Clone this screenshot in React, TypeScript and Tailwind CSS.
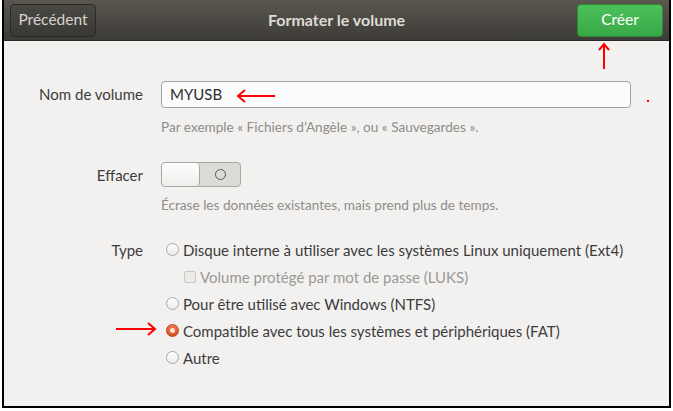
import React from 'react';

const font = { fontFamily: 'Lato, "Noto Sans", sans-serif' };

const Radio = ({ checked }: { checked?: boolean }) =>
  checked ? (
    <span className="flex h-[13px] w-[13px] items-center justify-center rounded-full border border-[#b3441c] bg-gradient-to-b from-[#f0764a] to-[#d9501e]">
      <span className="h-[5px] w-[5px] rounded-full bg-[#fbe3d9]" />
    </span>
  ) : (
    <span className="h-[13px] w-[13px] rounded-full border border-[#a9a8a4] bg-gradient-to-b from-white to-[#ecebe9]" />
  );

const options = [
  { label: 'Disque interne à utiliser avec les systèmes Linux uniquement (Ext4)' },
  { label: 'Volume protégé par mot de passe (LUKS)', sub: true },
  { label: 'Pour être utilisé avec Windows (NTFS)' },
  { label: 'Compatible avec tous les systèmes et périphériques (FAT)', checked: true },
  { label: 'Autre' },
];

export default function App() {
  return (
    <div className="h-[411px] w-[673px] bg-white" style={font}>
      <div className="relative ml-[2px] flex h-[408px] w-[669px] flex-col border-x-2 border-b-2 border-black bg-[#f2f1f0]">
        {/* header bar */}
        <div className="flex h-[41px] items-center justify-between border-b border-[#2a2926] bg-gradient-to-b from-[#5a5750] to-[#3d3b37] px-[6px]">
          <button className="h-[33px] w-[86px] rounded-[4px] border border-[#2b2a27] bg-gradient-to-b from-[#4a4843] to-[#3a3935] text-[15.5px] text-[#d6d3cc]">
            Précédent
          </button>
          <div className="text-[16px] font-bold text-[#dfdbd2]">Formater le volume</div>
          <button className="h-[33px] w-[86px] rounded-[4px] border border-[#2c8a38] bg-gradient-to-b from-[#4cc15a] to-[#37a846] text-[15.5px] text-white">
            Créer
          </button>
        </div>

        {/* form */}
        <div className="grid grid-cols-[139px_1fr] gap-x-[18px] pt-[40px] text-[15px] text-[#3c3c3c]">
          <div className="flex h-[27px] items-center justify-end">Nom de volume</div>
          <div className="flex h-[27px] w-[470px] items-center rounded-[4px] border border-[#a3a29e] bg-[#fbfbfb] pl-[8px] text-[#2c2c2c]">
            MYUSB
          </div>
          <div />
          <div className="mt-[9px] text-[13.6px] text-[#8e8d89]">
            Par exemple « Fichiers d’Angèle », ou « Sauvegardes ».
          </div>

          <div className="mt-[25px] flex h-[25px] items-center justify-end">Effacer</div>
          <div className="mt-[25px] flex h-[25px] w-[80px] overflow-hidden rounded-[4px] border border-[#a9a8a4] bg-[#dcdbd8]">
            <div className="w-[38px] rounded-[4px] border-r border-[#a9a8a4] bg-gradient-to-b from-white to-[#eeedeb]" />
            <div className="flex flex-1 items-center justify-center">
              <span className="h-[11px] w-[11px] rounded-full border border-[#555]" />
            </div>
          </div>
          <div />
          <div className="mt-[8px] text-[13.6px] text-[#8e8d89]">
            Écrase les données existantes, mais prend plus de temps.
          </div>

          <div className="mt-[25px] flex h-[18px] items-center justify-end">Type</div>
          <div className="mt-[25px] flex flex-col gap-[9px]">
            {options.map((o, i) => (
              <div key={i} className={`flex h-[18px] items-center ${o.sub ? 'pl-[23px]' : 'pl-[5px]'}`}>
                {o.sub ? (
                  <span className="h-[12px] w-[12px] rounded-[2px] border border-[#c8c7c3] bg-[#ecebe9]" />
                ) : (
                  <Radio checked={o.checked} />
                )}
                <span className={`ml-[4px] ${o.sub ? 'text-[#9a9995]' : ''}`}>{o.label}</span>
              </div>
            ))}
          </div>
        </div>

        {/* red annotations */}
        <svg className="absolute left-[594px] top-[42px]" width="12" height="28" viewBox="0 0 12 28">
          <path d="M6 27V3M1 8l5-6 5 6" stroke="#f00" strokeWidth="2" fill="none" />
        </svg>
        <svg className="absolute left-[232px] top-[88px]" width="40" height="16" viewBox="0 0 40 16">
          <path d="M39 8H3M9 2L2 8l7 6" stroke="#f00" strokeWidth="2" fill="none" />
        </svg>
        <span className="absolute left-[643px] top-[100px] h-[2px] w-[2px] bg-[#f00]" />
        <svg className="absolute left-[111px] top-[321px]" width="42" height="16" viewBox="0 0 42 16">
          <path d="M1 8h38M33 2l7 6-7 6" stroke="#f00" strokeWidth="2" fill="none" />
        </svg>
      </div>
    </div>
  );
}
